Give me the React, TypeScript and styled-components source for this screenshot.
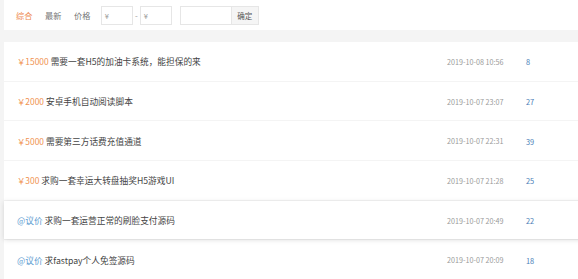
import React from "react";
import styled, { createGlobalStyle } from "styled-components";

const Global = createGlobalStyle`
  html, body { margin: 0; padding: 0; background: #f4f4f4; }
  body { font-family: "Noto Sans CJK SC", "Noto Sans", sans-serif; overflow: hidden; }
  * { box-sizing: border-box; }
`;

const Page = styled.div`
  width: 578px;
  height: 279px;
  padding-left: 4px;
  overflow: hidden;
`;

const FilterBar = styled.div`
  height: 30px;
  width: 600px;
  background: #fff;
  display: flex;
  align-items: center;
  padding-left: 12px;
  margin-bottom: 12px;
  color: #666;
`;

const Sort = styled.span<{ $active?: boolean }>`
  color: ${(p) => (p.$active ? "#ee8a4f" : "#777")};
  font-size: 8.2px;
  margin-right: 12.6px;
  line-height: 1;
  &:nth-of-type(3) {
    margin-right: 10.5px;
  }
`;

const PriceInput = styled.div<{ $w: number }>`
  width: ${(p) => p.$w}px;
  height: 19px;
  border: 1px solid #e6e6e6;
  background: #fff;
  display: flex;
  align-items: center;
  padding-left: 3px;
  color: #999;
  font-size: 7.5px;
`;

const Dash = styled.span`
  width: 7px;
  text-align: center;
  color: #999;
  font-size: 8px;
`;

const Gap = styled.span`
  width: 8px;
`;

const Confirm = styled.div`
  width: 27px;
  height: 19px;
  border: 1px solid #e6e6e6;
  border-left: none;
  background: #f5f5f5;
  color: #555;
  font-size: 7.5px;
  display: flex;
  align-items: center;
  justify-content: center;
`;

const List = styled.div`
  display: flex;
  flex-direction: column;
  gap: 1px;
  width: 600px;
`;

const Row = styled.div<{ $hover?: boolean }>`
  height: 38.7px;
  background: #fff;
  display: flex;
  align-items: center;
  padding-left: 13px;
  padding-top: 1px;
  font-size: 8.7px;
  position: relative;
  ${(p) =>
    p.$hover
      ? "box-shadow: 0 1px 5px rgba(0,0,0,0.13); z-index: 1;"
      : ""}
`;

const Title = styled.div`
  width: 430px;
  color: #444;
  white-space: nowrap;
`;

const Price = styled.span<{ $nego?: boolean }>`
  color: ${(p) => (p.$nego ? "#5b9bd1" : "#f0924f")};
  margin-right: 2px;
  font-size: ${(p) => (p.$nego ? "8.7px" : "8.4px")};
`;

const DateCell = styled.div`
  width: 79px;
  color: #9a9a9a;
  font-size: 7.2px;
  white-space: nowrap;
`;

const Count = styled.div`
  color: #4a80b8;
  font-size: 7.4px;
`;

const items = [
  { price: "￥15000", title: "需要一套H5的加油卡系统，能担保的来", date: "2019-10-08 10:56", n: 8 },
  { price: "￥2000", title: "安卓手机自动阅读脚本", date: "2019-10-07 23:07", n: 27 },
  { price: "￥5000", title: "需要第三方话费充值通道", date: "2019-10-07 22:31", n: 39 },
  { price: "￥300", title: "求购一套幸运大转盘抽奖H5游戏UI", date: "2019-10-07 21:28", n: 25 },
  { price: "@议价", nego: true, hover: true, title: "求购一套运营正常的刷脸支付源码", date: "2019-10-07 20:49", n: 22 },
  { price: "@议价", nego: true, title: "求fastpay个人免签源码", date: "2019-10-07 20:09", n: 18 },
];

export default function App() {
  return (
    <Page>
      <Global />
      <FilterBar>
        <Sort $active>综合</Sort>
        <Sort>最新</Sort>
        <Sort>价格</Sort>
        <PriceInput $w={32}>¥</PriceInput>
        <Dash>-</Dash>
        <PriceInput $w={32}>¥</PriceInput>
        <Gap />
        <PriceInput $w={52} />
        <Confirm>确定</Confirm>
      </FilterBar>
      <List>
        {items.map((it, i) => (
          <Row key={i} $hover={it.hover}>
            <Title>
              <Price $nego={it.nego}>{it.price}</Price>
              {it.title}
            </Title>
            <DateCell>{it.date}</DateCell>
            <Count>{it.n}</Count>
          </Row>
        ))}
      </List>
    </Page>
  );
}
